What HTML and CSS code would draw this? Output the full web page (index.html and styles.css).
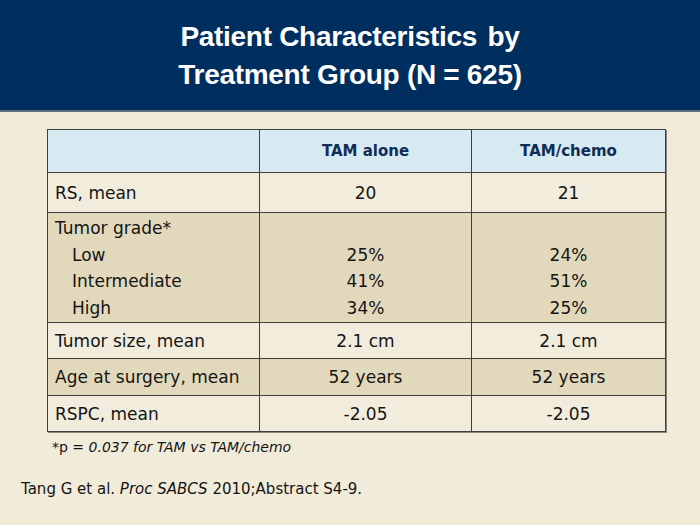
FILE: index.html
```html
<!DOCTYPE html>
<html lang="en">
<head>
<meta charset="utf-8">
<title>Patient Characteristics by Treatment Group</title>
<link rel="stylesheet" href="styles.css">
</head>
<body>
<header class="banner">
  <h1 class="title">Patient Characteristics <span class="gap">by</span><br>Treatment Group (N = 625)</h1>
</header>
<main class="content">
  <table class="data">
    <colgroup>
      <col class="c1"><col class="c2"><col class="c3">
    </colgroup>
    <thead>
      <tr class="head">
        <th></th>
        <th>TAM alone</th>
        <th>TAM/chemo</th>
      </tr>
    </thead>
    <tbody>
      <tr class="light r-rs">
        <td class="label">RS, mean</td>
        <td>20</td>
        <td>21</td>
      </tr>
      <tr class="dark r-grade">
        <td class="label">
          <div class="line">Tumor grade*</div>
          <div class="line sub">Low</div>
          <div class="line sub">Intermediate</div>
          <div class="line sub">High</div>
        </td>
        <td>
          <div class="line">&nbsp;</div>
          <div class="line">25%</div>
          <div class="line">41%</div>
          <div class="line">34%</div>
        </td>
        <td>
          <div class="line">&nbsp;</div>
          <div class="line">24%</div>
          <div class="line">51%</div>
          <div class="line">25%</div>
        </td>
      </tr>
      <tr class="light r-std">
        <td class="label">Tumor size, mean</td>
        <td>2.1 cm</td>
        <td>2.1 cm</td>
      </tr>
      <tr class="dark r-age">
        <td class="label">Age at surgery, mean</td>
        <td>52 years</td>
        <td>52 years</td>
      </tr>
      <tr class="light r-std">
        <td class="label">RSPC, mean</td>
        <td>-2.05</td>
        <td>-2.05</td>
      </tr>
    </tbody>
  </table>
  <p class="footnote">*p = <em>0.037 for TAM vs TAM/chemo</em></p>
  <p class="citation">Tang G et al. <em>Proc SABCS</em> 2010;Abstract S4-9.</p>
</main>
</body>
</html>
```

FILE: styles.css
```css
html, body {
  margin: 0;
  padding: 0;
}
body {
  width: 700px;
  height: 525px;
  background: #f1ebda;
  font-family: "DejaVu Sans", Verdana, sans-serif;
  color: #141414;
  overflow: hidden;
}
.banner {
  height: 110px;
  background: #002e5e;
  border-bottom: 2px solid #5d6e7d;
  display: flex;
  align-items: center;
  justify-content: center;
}
.title {
  margin: 0;
  padding-top: 1px;
  color: #ffffff;
  font-family: "Liberation Sans", Arial, sans-serif;
  font-weight: bold;
  font-size: 28px;
  line-height: 38px;
  letter-spacing: -0.3px;
  text-align: center;
}
.gap {
  margin-left: 3px;
}
.content {
  padding: 17px 0 0 47px;
}
.data {
  border-collapse: collapse;
  width: 618px;
  table-layout: fixed;
  font-size: 17px;
  box-shadow: 1px 1px 0 #8a8678;
}
.c1 { width: 212px; }
.c2 { width: 212px; }
.c3 { width: 194px; }
.data th, .data td {
  border: 1px solid #3e3e3e;
  text-align: center;
  vertical-align: middle;
  padding: 0 8px;
}
.head th {
  background: #d7e9f1;
  color: #0f2d56;
  font-size: 15px;
  font-weight: bold;
  height: 42px;
}
.data td.label {
  text-align: left;
  padding-left: 7px;
}
.light td { background: #f2ecdc; }
.dark td { background: #e2d9bd; }
.r-rs td { height: 39px; }
.data .r-grade td { height: 107px; vertical-align: top; padding-top: 2px; padding-bottom: 0; }
.r-std td { height: 35px; }
.r-age td { height: 36px; }
.line {
  line-height: 26.5px;
}
.line.sub {
  padding-left: 17px;
}
.footnote {
  margin: 5px 0 0 5px;
  font-size: 14px;
  line-height: 20px;
}
.footnote em, .citation em {
  font-style: italic;
}
.citation {
  margin: 22px 0 0 -26px;
  font-size: 15px;
  line-height: 20px;
}
```
